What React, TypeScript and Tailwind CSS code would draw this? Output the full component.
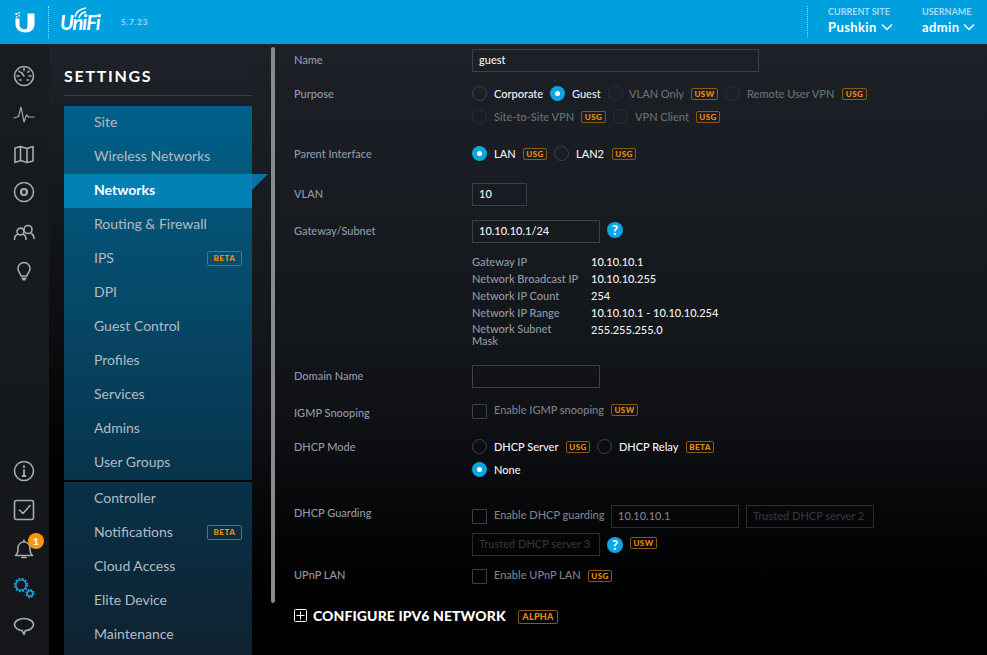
import React from "react";

const Tag = ({ t, x, y, w }: { t: string; x: number; y: number; w: number }) => (
  <span
    className="absolute h-[12px] rounded-[2px] border border-[#8a5a14] text-[#f58a00] text-[8px] leading-[10px] font-black tracking-[0.4px] text-center"
    style={{ left: x, top: y, width: w }}
  >
    {t}
  </span>
);

const Radio = ({ x, y, on, dim }: { x: number; y: number; on?: boolean; dim?: boolean }) =>
  on ? (
    <span className="absolute w-[15px] h-[15px] rounded-full bg-[#0ea5e4] flex items-center justify-center" style={{ left: x, top: y }}>
      <span className="w-[5px] h-[5px] rounded-full bg-white" />
    </span>
  ) : (
    <span
      className={`absolute w-[15px] h-[15px] rounded-full border ${dim ? "border-[#2d3238]" : "border-[#3f444a]"}`}
      style={{ left: x, top: y }}
    />
  );

const Check = ({ x, y }: { x: number; y: number }) => (
  <span className="absolute w-[15px] h-[15px] rounded-[1px] border border-[#3c4045]" style={{ left: x, top: y }} />
);

const Txt = ({ x, y, c, children }: { x: number; y: number; c: string; children: React.ReactNode }) => (
  <span className="absolute text-[11px] leading-[14px] whitespace-nowrap font-medium" style={{ left: x, top: y, color: c }}>
    {children}
  </span>
);

const Label = ({ y, children }: { y: number; children: React.ReactNode }) => (
  <span className="absolute left-[294px] text-[11px] leading-[14px] font-medium text-[#8f9aa6] whitespace-nowrap" style={{ top: y }}>
    {children}
  </span>
);

const Field = ({ x, y, w, v, ph, c, dim }: { x: number; y: number; w: number; v?: string; ph?: string; c?: string; dim?: boolean }) => (
  <div
    className={`absolute h-[23px] border ${dim ? "border-[#2a2c30]" : "border-[#3d4046]"} pl-[6px] text-[11px] leading-[20px] font-medium whitespace-nowrap`}
    style={{ left: x, top: y, width: w, color: ph ? "#33363a" : c || "#f2f4f5" }}
  >
    {v || ph}
  </div>
);

const Help = ({ x, y }: { x: number; y: number }) => (
  <span
    className="absolute w-[16px] h-[16px] rounded-full bg-[#0ea5e4] text-white text-[13px] leading-[16px] font-black text-center"
    style={{ left: x, top: y }}
  >
    ?
  </span>
);

const Beta = ({ y }: { y: number }) => (
  <span
    className="absolute left-[207px] w-[35px] h-[15px] rounded-[2px] border border-[#7b6a3c] text-[#f58a00] text-[8px] leading-[13px] font-black tracking-[0.6px] text-center"
    style={{ top: y }}
  >
    BETA
  </span>
);

const stroke = { fill: "none", stroke: "#a6acb0", strokeWidth: 1.6, strokeLinecap: "round" as const, strokeLinejoin: "round" as const };

const Icon = ({ y, children }: { y: number; children: React.ReactNode }) => (
  <svg className="absolute left-[12px]" style={{ top: y }} width="24" height="24" viewBox="0 0 24 24" {...stroke}>
    {children}
  </svg>
);

const nav1 = ["Site", "Wireless Networks", "Networks", "Routing & Firewall", "IPS", "DPI", "Guest Control", "Profiles", "Services", "Admins", "User Groups"];
const nav2 = ["Controller", "Notifications", "Cloud Access", "Elite Device", "Maintenance"];

export default function App() {
  return (
    <div className="relative w-[987px] h-[655px] overflow-hidden bg-black font-[family-name:Lato,sans-serif] antialiased">
      <div className="absolute left-[252px] top-[44px] right-0 bottom-0 bg-[linear-gradient(to_bottom,#1d2127_0%,#14171c_45%,#0e1014_62%,#060709_76%,#000000_90%)]" />
      <div className="absolute left-0 top-[44px] w-[49px] bottom-0 bg-gradient-to-b from-[#181c21] to-[#141619]" />
      <div className="absolute left-[49px] top-[44px] w-[203px] bottom-0 bg-[linear-gradient(to_bottom,#1f2329_0%,#0c0e11_45%,#000000_70%)]" />

      <div className="absolute left-0 top-0 w-[987px] h-[44px] bg-[#00a0df]">
        <svg className="absolute left-[14px] top-[11px]" width="21" height="22" viewBox="0 0 21 22">
          <path d="M13.500 2.500H20.500V13C20.500 18.600 16.600 21.500 11.500 21.500 6.200 21.500 1.500 18.500 1.500 13V7.500H5.500V13.500C5.500 16.500 8 18.300 11 18.300 13.300 18.300 13.500 16 13.500 13.500Z" fill="#fff" />
          <rect x="1.500" y="2" width="2" height="2" fill="#fff" />
          <rect x="4.500" y="1" width="1.500" height="1.500" fill="#fff" />
          <rect x="4.500" y="4" width="1.500" height="1.500" fill="#fff" />
          <rect x="2" y="5.200" width="1.400" height="1.400" fill="#fff" />
        </svg>
        <div className="absolute left-[48px] top-[6px] h-[32px] border-l border-dotted border-[#9fdcf5]" />
        <span className="absolute left-[60px] top-[10px] text-[20px] leading-[24px] italic font-bold text-white tracking-[-1px]">UniFi</span>
        <span className="absolute left-[98px] top-[14px] w-[3px] h-[3px] rounded-full bg-white" />
        <svg className="absolute left-[73px] top-[6px]" width="16" height="12" viewBox="0 0 16 12" fill="none" stroke="#fff" strokeWidth="1.700">
          <path d="M2 11C3 6 7 3 13 2" />
          <path d="M6 12C6.800 8.500 9 6.500 13 5.800" />
        </svg>
        <span className="absolute left-[121px] top-[15px] text-[8px] leading-[14px] font-bold tracking-[0.8px] text-[#9ddcf5]">5.7.23</span>

        <div className="absolute left-[807px] top-[6px] h-[31px] border-l border-dotted border-[#9fdcf5]" />
        <span className="absolute left-[828px] top-[6px] text-[9px] leading-[12px] font-bold text-[#a3def6]">CURRENT SITE</span>
        <span className="absolute left-[828px] top-[19px] text-[13px] leading-[16px] font-bold tracking-[0.4px] text-white">Pushkin</span>
        <svg className="absolute left-[881px] top-[23px]" width="12" height="8" viewBox="0 0 12 8" fill="none" stroke="#fff" strokeWidth="1.400"><path d="M1 1.500L6 6.500L11 1.500" /></svg>
        <span className="absolute left-[922px] top-[6px] text-[9px] leading-[12px] font-bold text-[#a3def6]">USERNAME</span>
        <span className="absolute left-[922px] top-[19px] text-[13px] leading-[16px] font-bold tracking-[0.4px] text-white">admin</span>
        <svg className="absolute left-[963px] top-[23px]" width="12" height="8" viewBox="0 0 12 8" fill="none" stroke="#fff" strokeWidth="1.400"><path d="M1 1.500L6 6.500L11 1.500" /></svg>
      </div>

      <Icon y={64}>
        <circle cx="12" cy="12" r="9.500" />
        <path d="M12 12L9.500 8.500M12 4.500v2M5 12h2M17 12h2M7 7l1.200 1.200M17 7l-1.200 1.200M7.500 16h1.500M15 16h1.500" />
      </Icon>
      <Icon y={103}>
        <path d="M2 15L6.500 13.500L9 4L12 19L14.500 12L16.500 14L22 14" strokeWidth="1.200" />
      </Icon>
      <Icon y={142}>
        <path d="M3 6L8.500 4.500 15 6.500 21 4.500V19L15 20.500 8.500 18.500 3 20.500ZM8.500 4.500V18.500M15 6.500V20.500" />
      </Icon>
      <Icon y={180}>
        <circle cx="12" cy="12" r="9.500" />
        <circle cx="12" cy="12" r="3" strokeWidth="2.200" />
      </Icon>
      <Icon y={220}>
        <circle cx="8.500" cy="11.500" r="3.400" />
        <circle cx="16" cy="9.500" r="4" />
        <path d="M2.500 19.500c0-3 1.800-4.800 3.500-5.300M11 14.200c1.800.6 3 2.400 3 5.300M19.500 13.500c1.500.8 2.500 2.500 2.500 5" />
      </Icon>
      <Icon y={259}>
        <path d="M9 17C9 14.500 6 13.500 6 9.500a6 6 0 0 1 12 0C18 13.500 15 14.500 15 17ZM10 19.200h4M10.800 20.800h2.400" />
      </Icon>
      <Icon y={459}>
        <circle cx="12" cy="12" r="9.500" />
        <path d="M12 11v6M12 7v1.200M10.500 17h3" strokeWidth="1.800" />
      </Icon>
      <Icon y={498}>
        <rect x="2.500" y="2.500" width="19" height="19" rx="2" />
        <path d="M7.500 12L11 15.500 18 7.500" />
      </Icon>
      <Icon y={536}>
        <path d="M3.500 19.500C5.800 18 6 16 6 12.500 6 8.500 8.500 6 12 6s6 2.500 6 6.500c0 3.500.2 5.500 2.500 7ZM10 21.500h4M12 6V4" />
      </Icon>
      <span className="absolute left-[28px] top-[533px] w-[16px] h-[16px] rounded-full bg-[#f59a0c] text-white text-[10px] leading-[16px] font-black text-center">1</span>
      <svg className="absolute left-[13px] top-[577px]" width="22" height="22" viewBox="0 0 22 22" fill="none" stroke="#18a4e2" strokeWidth="1.500">
        <circle cx="8" cy="8" r="5.200" />
        <circle cx="8" cy="8" r="6.400" strokeDasharray="1.800 1.550" strokeWidth="1.700" />
        <circle cx="17" cy="16.500" r="2.700" />
        <circle cx="17" cy="16.500" r="3.900" strokeDasharray="1.600 1.460" strokeWidth="1.500" />
      </svg>
      <Icon y={614}>
        <path d="M12 4.500c5 0 9.500 2.600 9.500 6.100 0 3.200-3.800 5.800-8.200 6L12 20.500l-1.800-3.900C6 16.200 2.500 13.800 2.500 10.600 2.500 7.100 7 4.500 12 4.500Z" />
      </Icon>

      <span className="absolute left-[64px] top-[66px] text-[16px] leading-[20px] font-bold tracking-[1.700px] text-white">SETTINGS</span>
      <div className="absolute left-[64px] top-[95px] w-[188px] h-px bg-[#3b3f45]" />

      <div className="absolute left-[64px] top-[106px] w-[188px] h-[374px] bg-gradient-to-b from-[#006089] to-[#07344b]" />
      <div className="absolute left-[64px] top-[482px] w-[188px] h-[173px] bg-gradient-to-b from-[#07324a] to-[#0e2230]" />
      <div className="absolute left-[64px] top-[174px] w-[188px] h-[34px] bg-[#0380b3]" />
      <svg className="absolute left-[252px] top-[174px]" width="16" height="16" viewBox="0 0 16 16"><path d="M0 0H16L0 16Z" fill="#0a72a0" /></svg>
      {nav1.map((n, i) => (
        <span
          key={n}
          className={`absolute left-[94px] text-[14px] leading-[20px] whitespace-nowrap ${n === "Networks" ? "text-white font-bold" : "text-[#b2bcc2]"}`}
          style={{ top: 112 + i * 34 }}
        >
          {n}
        </span>
      ))}
      {nav2.map((n, i) => (
        <span key={n} className="absolute left-[94px] text-[14px] leading-[20px] whitespace-nowrap text-[#b2bcc2]" style={{ top: 488 + i * 34 }}>
          {n}
        </span>
      ))}
      <Beta y={251} />
      <Beta y={525} />

      <div className="absolute left-[271px] top-[47px] w-[4px] h-[556px] rounded-[2px] bg-[#8a8a8a]" />

      <Label y={53}>Name</Label>
      <Field x={472} y={49} w={287} v="guest" />

      <Label y={87}>Purpose</Label>
      <Radio x={472} y={86} />
      <Txt x={494} y={87} c="#f2f4f5">Corporate</Txt>
      <Radio x={550} y={86} on />
      <Txt x={572} y={87} c="#e8eaec">Guest</Txt>
      <Radio x={608} y={86} dim />
      <Txt x={629} y={87} c="#6b7075">VLAN Only</Txt>
      <Tag t="USW" x={691} y={88} w={27} />
      <Radio x={725} y={86} dim />
      <Txt x={747} y={87} c="#6b7075">Remote User VPN</Txt>
      <Tag t="USG" x={842} y={88} w={25} />
      <Radio x={472} y={109} dim />
      <Txt x={494} y={110} c="#6b7075">Site-to-Site VPN</Txt>
      <Tag t="USG" x={581} y={111} w={25} />
      <Radio x={613} y={109} dim />
      <Txt x={635} y={110} c="#6b7075">VPN Client</Txt>
      <Tag t="USG" x={696} y={111} w={24} />

      <Label y={147}>Parent Interface</Label>
      <Radio x={472} y={146} on />
      <Txt x={494} y={147} c="#f2f4f5">LAN</Txt>
      <Tag t="USG" x={523} y={148} w={24} />
      <Radio x={554} y={146} />
      <Txt x={576} y={147} c="#f2f4f5">LAN2</Txt>
      <Tag t="USG" x={612} y={148} w={24} />

      <Label y={187}>VLAN</Label>
      <Field x={472} y={183} w={55} v="10" />

      <Label y={224}>Gateway/Subnet</Label>
      <Field x={472} y={220} w={128} v="10.10.10.1/24" />
      <Help x={607} y={222} />

      {([
        ["Gateway IP", "10.10.10.1", 255],
        ["Network Broadcast IP", "10.10.10.255", 272],
        ["Network IP Count", "254", 289],
        ["Network IP Range", "10.10.10.1 - 10.10.10.254", 306],
      ] as [string, string, number][]).map(([a, b, y]) => (
        <React.Fragment key={a}>
          <Txt x={472} y={y} c="#8f9aa6">{a}</Txt>
          <Txt x={591} y={y} c="#f2f4f5">{b}</Txt>
        </React.Fragment>
      ))}
      <span className="absolute left-[472px] top-[323px] w-[100px] text-[11px] leading-[12px] font-medium text-[#8f9aa6]">
        Network Subnet<br />Mask
      </span>
      <Txt x={591} y={323} c="#f2f4f5">255.255.255.0</Txt>

      <Label y={369}>Domain Name</Label>
      <Field x={472} y={365} w={128} v=" " />

      <Label y={406}>IGMP Snooping</Label>
      <Check x={472} y={404} />
      <Txt x={494} y={403} c="#7d8186">Enable IGMP snooping</Txt>
      <Tag t="USW" x={611} y={404} w={27} />

      <Label y={440}>DHCP Mode</Label>
      <Radio x={472} y={439} />
      <Txt x={494} y={440} c="#f2f4f5">DHCP Server</Txt>
      <Tag t="USG" x={566} y={441} w={24} />
      <Radio x={597} y={439} />
      <Txt x={619} y={440} c="#f2f4f5">DHCP Relay</Txt>
      <Tag t="BETA" x={686} y={441} w={28} />
      <Radio x={472} y={462} on />
      <Txt x={494} y={463} c="#f2f4f5">None</Txt>

      <Label y={506}>DHCP Guarding</Label>
      <Check x={472} y={509} />
      <Txt x={494} y={508} c="#7d8186">Enable DHCP guarding</Txt>
      <Field x={611} y={505} w={128} v="10.10.10.1" c="#7d8186" dim />
      <Field x={746} y={505} w={128} ph="Trusted DHCP server 2" dim />
      <Field x={472} y={533} w={128} ph="Trusted DHCP server 3" dim />
      <Help x={607} y={537} />
      <Tag t="USW" x={630} y={537} w={27} />

      <Label y={568}>UPnP LAN</Label>
      <Check x={472} y={569} />
      <Txt x={494} y={568} c="#7d8186">Enable UPnP LAN</Txt>
      <Tag t="USG" x={588} y={570} w={24} />

      <svg className="absolute left-[294px] top-[609px]" width="13" height="13" viewBox="0 0 13 13" fill="none" stroke="#fff" strokeWidth="1">
        <rect x="0.500" y="0.500" width="12" height="12" rx="1" />
        <path d="M6.500 2.500V10.500M2.500 6.500H10.500" />
      </svg>
      <span className="absolute left-[313px] top-[608px] text-[14px] leading-[16px] font-black tracking-[0.1px] text-white whitespace-nowrap">CONFIGURE IPV6 NETWORK</span>
      <span className="absolute left-[518px] top-[610px] w-[40px] h-[14px] rounded-[2px] border border-[#8a5a14] text-[#f58a00] text-[9px] leading-[12px] font-black tracking-[0.3px] text-center">ALPHA</span>
    </div>
  );
}
